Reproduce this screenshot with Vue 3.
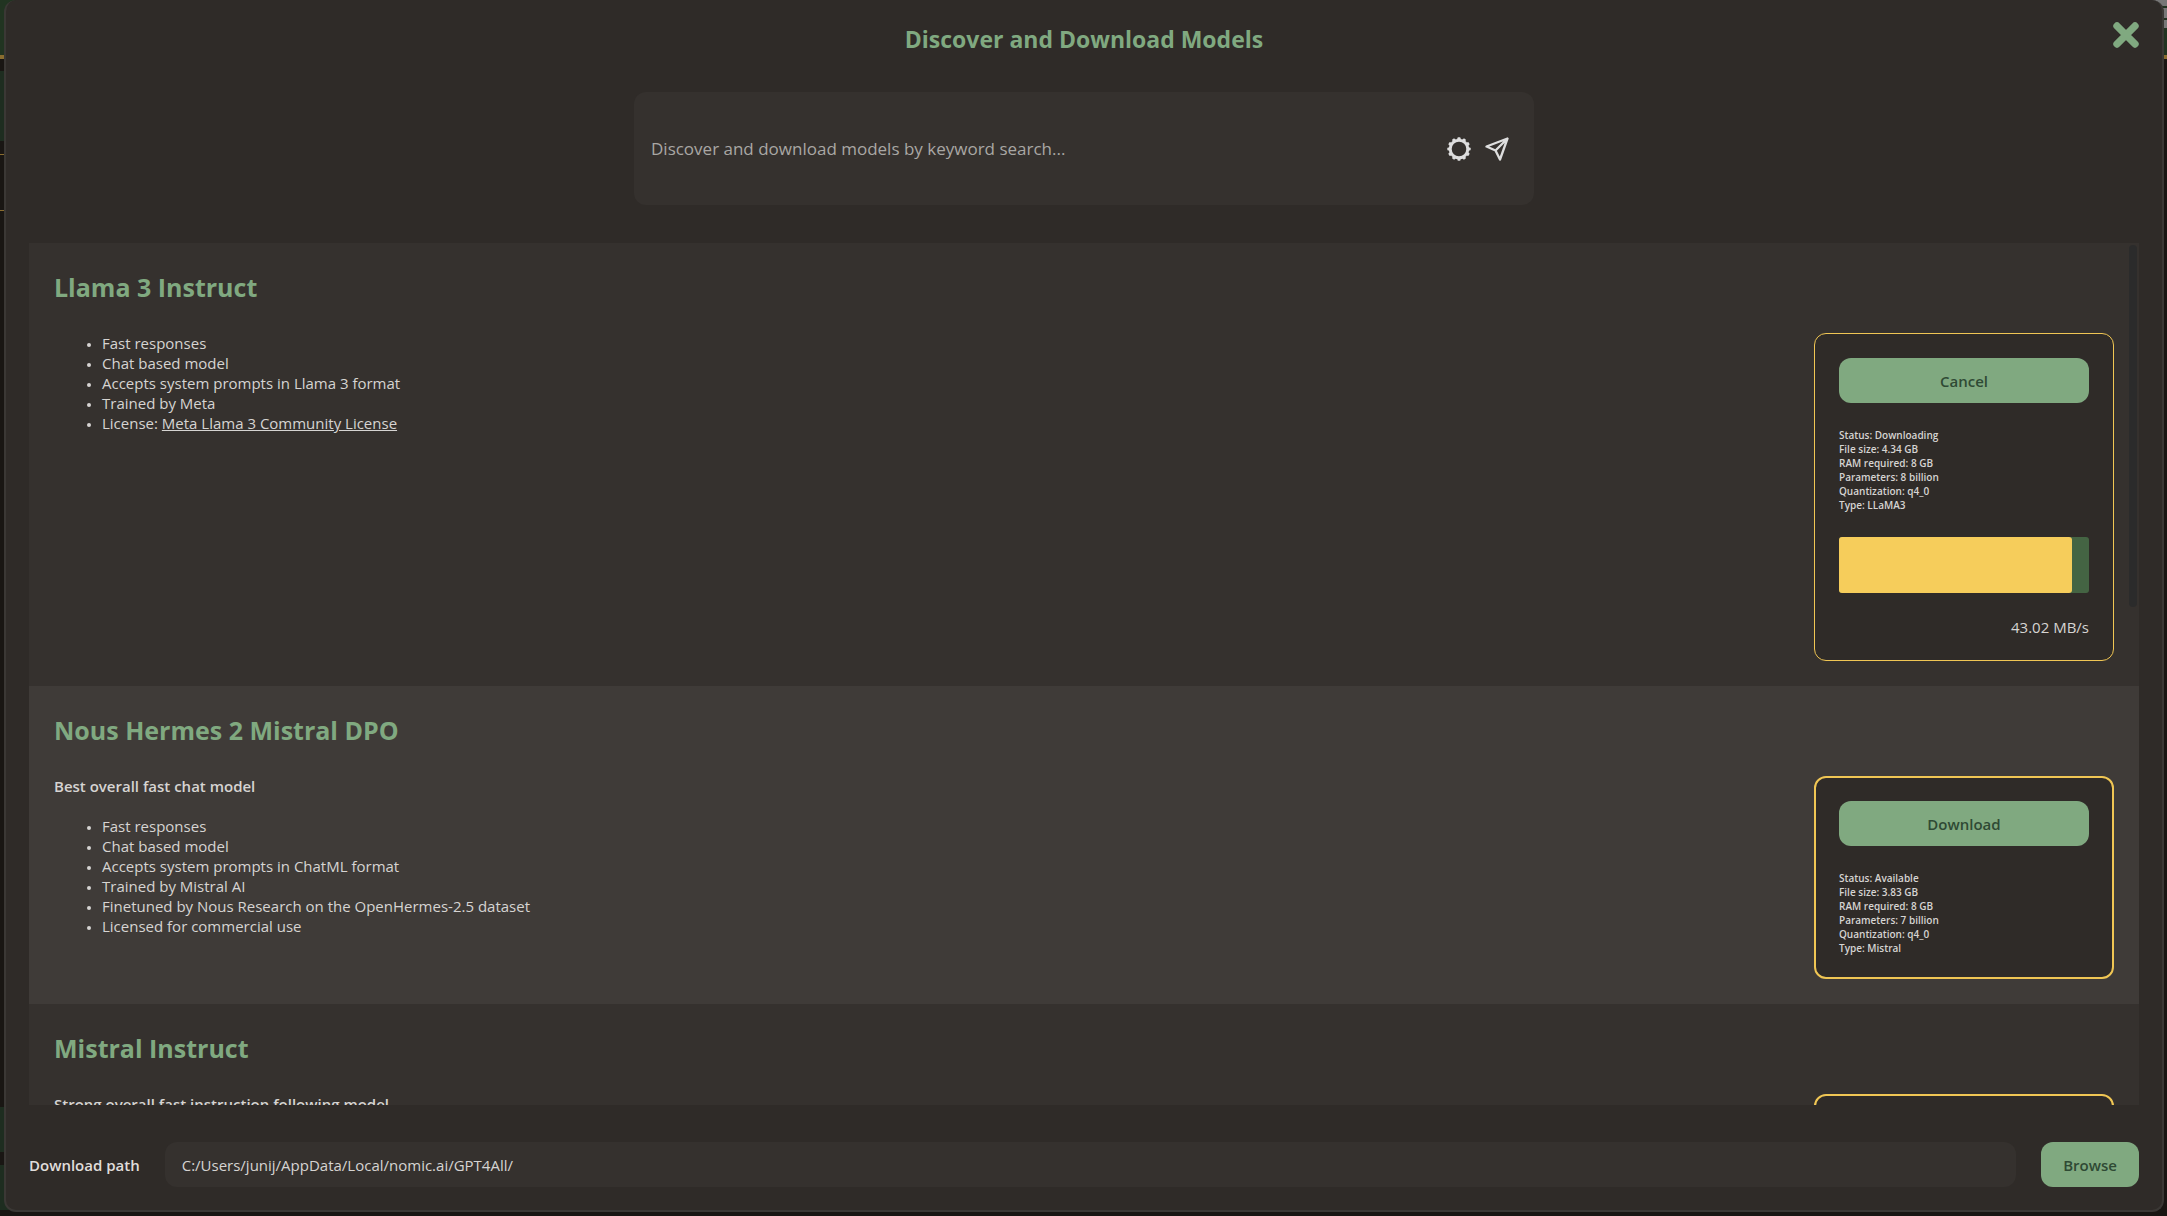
<script setup>
import { ref } from 'vue'

const search = ref('')
const downloadPath = ref('C:/Users/junij/AppData/Local/nomic.ai/GPT4All/')

const models = [
  {
    name: 'Llama 3 Instruct',
    summary: '',
    points: [
      { text: 'Fast responses' },
      { text: 'Chat based model' },
      { text: 'Accepts system prompts in Llama 3 format' },
      { text: 'Trained by Meta' },
      { text: 'License: ', link: 'Meta Llama 3 Community License' }
    ],
    action: 'Cancel',
    facts: ['Status: Downloading', 'File size: 4.34 GB', 'RAM required: 8 GB', 'Parameters: 8 billion', 'Quantization: q4_0', 'Type: LLaMA3'],
    progress: 93,
    speed: '43.02 MB/s'
  },
  {
    name: 'Nous Hermes 2 Mistral DPO',
    summary: 'Best overall fast chat model',
    points: [
      { text: 'Fast responses' },
      { text: 'Chat based model' },
      { text: 'Accepts system prompts in ChatML format' },
      { text: 'Trained by Mistral AI' },
      { text: 'Finetuned by Nous Research on the OpenHermes-2.5 dataset' },
      { text: 'Licensed for commercial use' }
    ],
    action: 'Download',
    facts: ['Status: Available', 'File size: 3.83 GB', 'RAM required: 8 GB', 'Parameters: 7 billion', 'Quantization: q4_0', 'Type: Mistral']
  },
  {
    name: 'Mistral Instruct',
    summary: 'Strong overall fast instruction following model',
    points: [],
    action: '',
    facts: []
  }
]

const teeth = Array.from({ length: 12 }, (_, i) => i * 30)
</script>

<template>
  <div class="window">
    <div class="behind left" aria-hidden="true">
      <i class="green head"></i>
      <i class="gold"></i>
      <i class="green chat"></i>
      <i class="rule"></i>
      <i class="rule second"></i>
      <i class="green low"></i>
      <i class="green low last"></i>
    </div>
    <main class="dialog">
      <header class="top">
        <h1>Discover and Download Models</h1>
        <button class="close" type="button" aria-label="Close">
          <svg viewBox="0 0 26 26" width="26" height="26"><path d="M4 4 22 22M22 4 4 22" fill="none" stroke="#80a980" stroke-width="7.4" stroke-linecap="round" /></svg>
        </button>
      </header>

      <form class="search" @submit.prevent>
        <input v-model="search" type="text" aria-label="Search models" placeholder="Discover and download models by keyword search..." />
        <button type="button" aria-label="Search settings">
          <svg viewBox="0 0 24 24" width="24" height="24">
            <circle cx="12" cy="12" r="8.8" fill="none" stroke="#dedede" stroke-width="3" />
            <rect v-for="a in teeth" :key="a" x="10.4" y="0.3" width="3.2" height="3" rx="1" fill="#dedede" :transform="`rotate(${a} 12 12)`" />
          </svg>
        </button>
        <button type="submit" aria-label="Search">
          <svg viewBox="0 0 24 24" width="24" height="24" fill="none" stroke="#dedede" stroke-width="2.3" stroke-linejoin="round">
            <path d="M22.5 1.5 1.5 9.5 10.5 13.5 15 22.5ZM22.5 1.5 10.5 13.5" />
          </svg>
        </button>
      </form>

      <section class="list-frame">
        <div class="list">
          <article v-for="m in models" :key="m.name" class="model">
            <h2>{{ m.name }}</h2>
            <div class="body">
              <div class="about">
                <p v-if="m.summary">{{ m.summary }}</p>
                <ul v-if="m.points.length">
                  <li v-for="p in m.points" :key="p.text">{{ p.text }}<a v-if="p.link" href="#">{{ p.link }}</a></li>
                </ul>
              </div>
              <aside class="card" :class="{ active: m.progress }">
                <button v-if="m.action" class="btn" type="button">{{ m.action }}</button>
                <div v-if="m.facts.length" class="facts">
                  <div v-for="f in m.facts" :key="f">{{ f }}</div>
                </div>
                <template v-if="m.progress">
                  <div class="bar" role="progressbar" aria-label="Download progress" :aria-valuenow="m.progress" aria-valuemin="0" aria-valuemax="100">
                    <div class="fill" :style="{ width: m.progress + '%' }"></div>
                  </div>
                  <div class="speed">{{ m.speed }}</div>
                </template>
              </aside>
            </div>
          </article>
        </div>
        <div class="thumb"></div>
      </section>

      <footer class="path">
        <label for="download-path">Download path</label>
        <input id="download-path" v-model="downloadPath" type="text" />
        <button class="btn browse" type="button">Browse</button>
      </footer>
    </main>
    <div class="behind right" aria-hidden="true">
      <i class="caption"></i>
      <i class="green head"></i>
      <i class="gold"></i>
    </div>
  </div>
</template>

<style>
body {
  margin: 0;
  background: #191613;
}
</style>

<style scoped>
.window {
  position: relative;
  box-sizing: border-box;
  height: 100vh;
  padding: 0 3px 4px 4px;
  overflow: hidden;
  background: #191613;
  color: #d6d4d2;
  font-family: "Open Sans", "Noto Sans", sans-serif;
  font-size: 15px;
  line-height: 20px;
}

/* Slivers of the main window that stay visible around the dialog */
.behind {
  position: absolute;
  top: 0;
  bottom: 0;
  width: 16px;
}
.left { left: 0; }
.right { right: 0; }
.behind i {
  position: absolute;
  left: 0;
  width: 100%;
}
.green { background: #1e2d20; }
.head { top: 0; height: 55px; background: #213421; }
.gold { top: 55px; height: 4px; background: #8a6d2f; }
.chat { top: 71px; height: 70px; }
.rule { top: 154px; height: 1px; background: #8a6d2f; }
.second { top: 210px; }
.low { bottom: 64px; height: 45px; }
.last { bottom: 6px; }
.right .caption {
  top: 0;
  height: 28px;
  background: linear-gradient(#777 6px, #213421 6px 8px, #777 8px 18px, #213421 18px 20px, #777 20px);
  z-index: 1;
}

.dialog {
  position: relative;
  z-index: 2;
  box-sizing: border-box;
  height: 100%;
  display: flex;
  flex-direction: column;
  padding: 0 23px 23px;
  border: 2px solid #3b3835;
  border-top: 0;
  border-radius: 12px;
  background: #2f2b28;
}

button {
  padding: 0;
  border: 0;
  background: none;
  font: inherit;
  cursor: pointer;
}
svg { display: block; }

.top {
  position: relative;
  padding: 22px 0 35px;
  text-align: center;
}
h1 {
  margin: 0;
  color: #80a980;
  font-size: 23px;
  font-weight: 700;
  line-height: 35px;
}
.close {
  position: absolute;
  top: 22px;
  right: 0;
}

.search {
  box-sizing: border-box;
  width: 900px;
  max-width: 100%;
  height: 113px;
  margin: 0 auto 38px;
  padding: 0 25px 0 17px;
  display: flex;
  align-items: center;
  gap: 14px;
  border-radius: 12px;
  background: #35312e;
}
input {
  flex: 1;
  min-width: 0;
  border: 0;
  outline: 0;
  background: none;
  color: #d6d4d2;
  font: inherit;
}
.search input {
  padding: 0;
  font-size: 17px;
  line-height: 24px;
}
.search input::placeholder { color: #a9a7a4; opacity: 1; }

.list-frame {
  position: relative;
  flex: 1;
  min-height: 0;
}
.list {
  height: 100%;
  overflow-y: auto;
  scrollbar-width: none;
}
.thumb {
  position: absolute;
  top: 2px;
  right: 2px;
  width: 8px;
  height: 42%;
  border-radius: 4px;
  background: #2b2b2b;
}

.model {
  padding: 25px;
  background: #35312e;
}
.model:nth-child(even) { background: #3f3b38; }
h2 {
  margin: 0 0 27px;
  color: #80a980;
  font-size: 25px;
  font-weight: 700;
  line-height: 38px;
}
.body {
  display: flex;
  justify-content: space-between;
  align-items: flex-start;
}
.about p {
  margin: 0 0 20px;
  font-weight: 600;
}
ul {
  margin: 0;
  padding: 0 0 0 48px;
}
li::marker { font-size: 12px; }
a { color: inherit; }

.card {
  box-sizing: border-box;
  width: 300px;
  min-height: 203px;
  display: flex;
  flex-direction: column;
  gap: 25px;
  padding: 23px 23px 22px;
  border: 2px solid #f0c654;
  border-radius: 12px;
  background: #2f2b28;
}
.card.active {
  padding: 24px 24px 23px;
  border-width: 1px;
}
.btn {
  height: 45px;
  border-radius: 12px;
  background: #80a980;
  color: #2f4a34;
  font-weight: 600;
}
.facts {
  font-size: 10px;
  font-weight: 600;
  line-height: 14px;
}
.bar {
  height: 56px;
  border-radius: 3px;
  background: #446443;
}
.fill {
  height: 100%;
  border-radius: 3px;
  background: #f6cd5b;
}
.speed {
  line-height: 19px;
  text-align: right;
}

.path {
  display: flex;
  align-items: center;
  gap: 25px;
  padding-top: 37px;
}
.path label {
  color: #e0dedc;
  font-weight: 600;
}
.path input {
  box-sizing: border-box;
  height: 45px;
  padding: 0 17px;
  border-radius: 12px;
  background: #35312e;
}
.browse { width: 98px; }
</style>
